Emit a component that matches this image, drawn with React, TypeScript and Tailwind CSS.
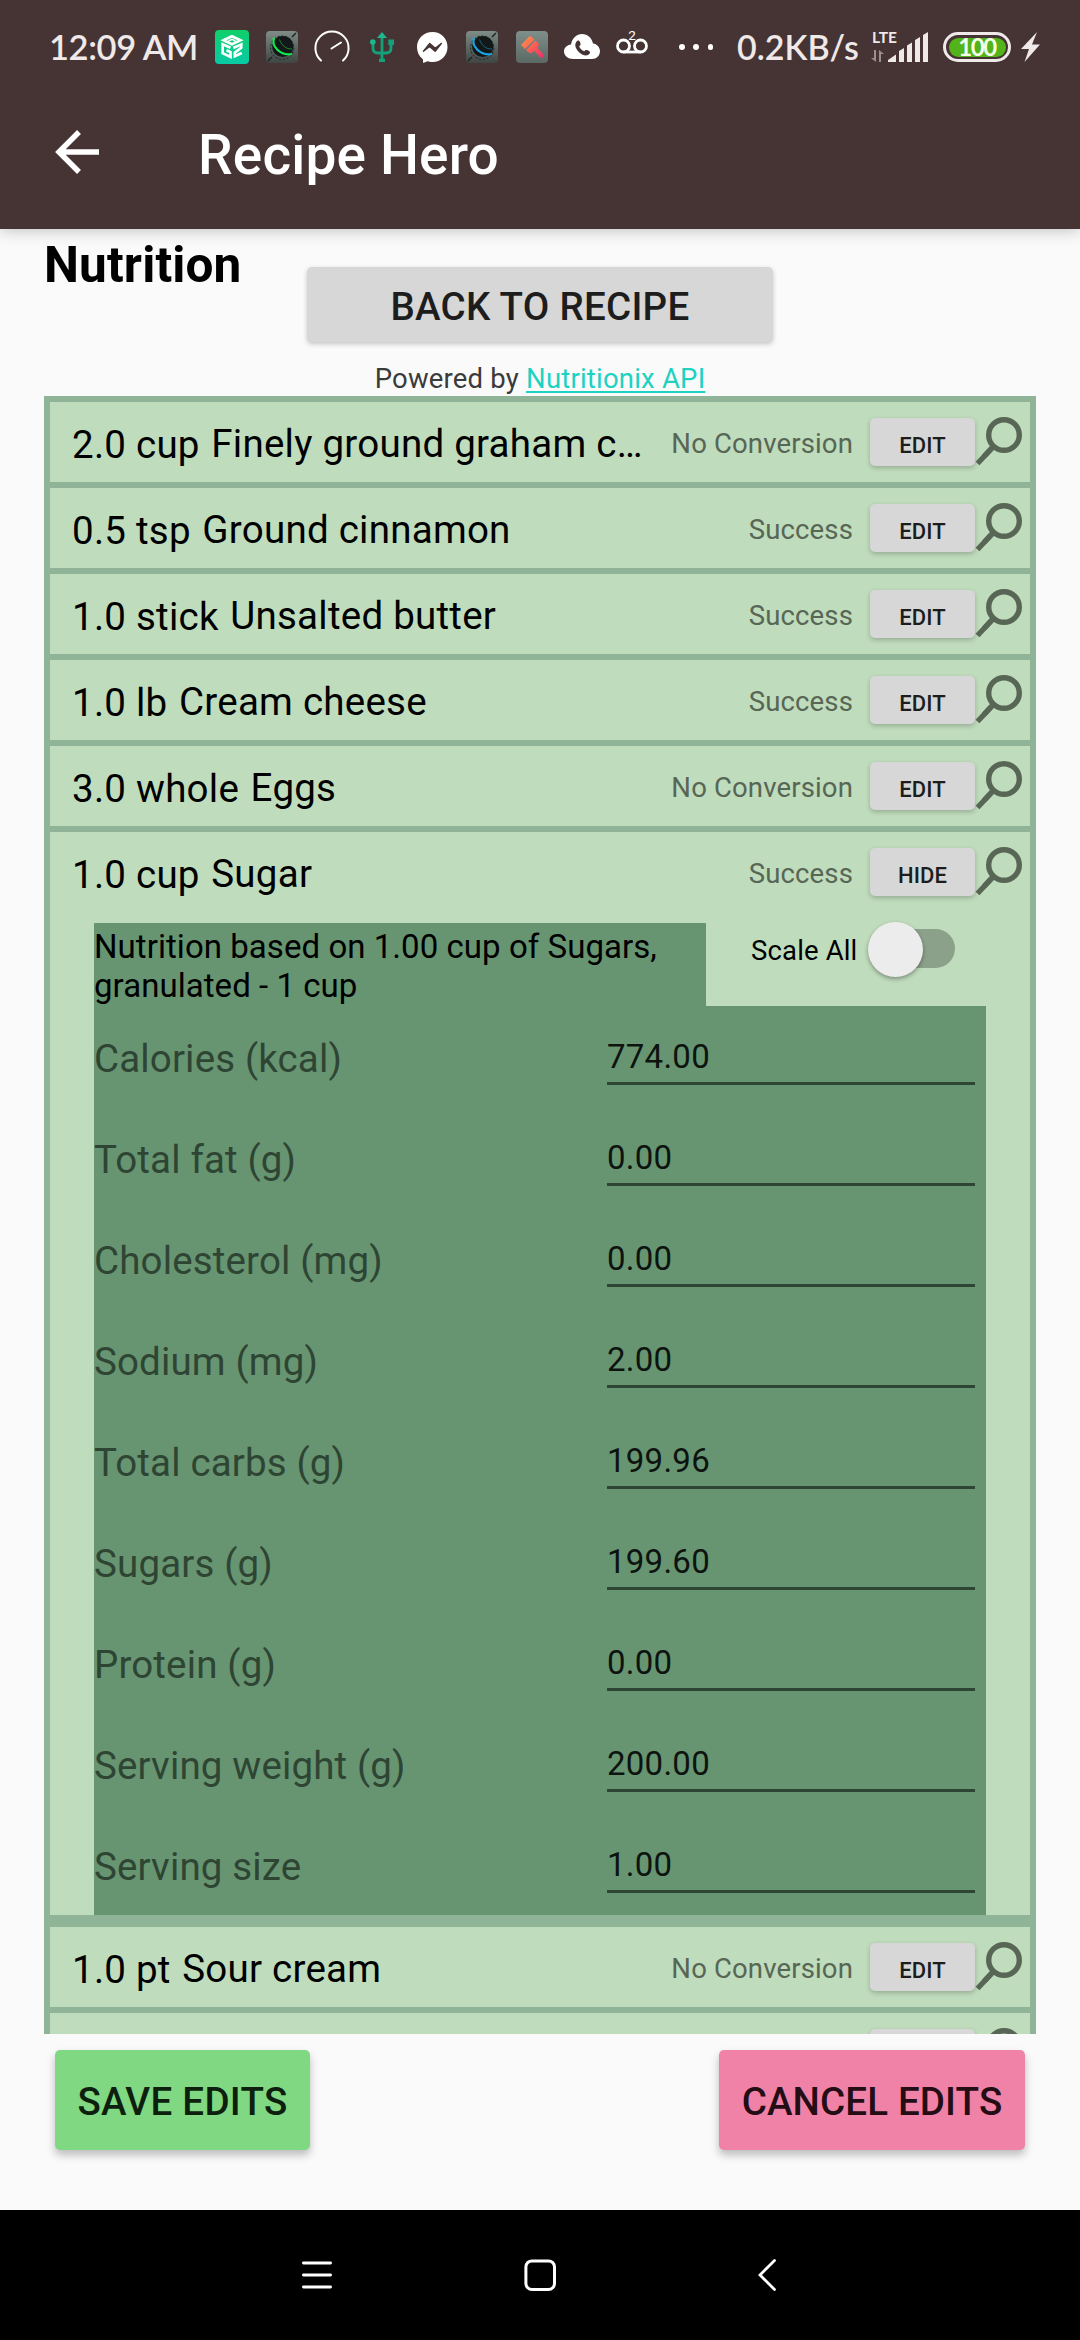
import React from "react";

type Ingredient = { amount: string; name: string; status: string };

const before: Ingredient[] = [
  { amount: "2.0 cup", name: "Finely ground graham c…", status: "No Conversion" },
  { amount: "0.5 tsp", name: "Ground cinnamon", status: "Success" },
  { amount: "1.0 stick", name: "Unsalted butter", status: "Success" },
  { amount: "1.0 lb", name: "Cream cheese", status: "Success" },
  { amount: "3.0 whole", name: "Eggs", status: "No Conversion" },
];

const facts: [string, string][] = [
  ["Calories (kcal)", "774.00"],
  ["Total fat (g)", "0.00"],
  ["Cholesterol (mg)", "0.00"],
  ["Sodium (mg)", "2.00"],
  ["Total carbs (g)", "199.96"],
  ["Sugars (g)", "199.60"],
  ["Protein (g)", "0.00"],
  ["Serving weight (g)", "200.00"],
  ["Serving size", "1.00"],
];

function SearchIcon() {
  return (
    <svg className="mt-3.5 h-[52px] w-[50px] shrink-0" viewBox="0 0 50 52" fill="none" stroke="#586655">
      <circle cx="29" cy="19" r="15.3" strokeWidth="5.4" />
      <path d="M17.500 31.500 2.500 47.500" strokeWidth="5.400" />
      <path d="M15.800 33.200 10 39.300" strokeWidth="5.400" strokeLinecap="round" />
    </svg>
  );
}

function RowHead({ item, action }: { item: Ingredient; action: string }) {
  return (
    <div className="flex h-20 items-start pl-[22px]">
      <div className="flex w-[578px] items-start text-[38.5px] leading-[45px] tracking-[0.25px] whitespace-nowrap text-black">
        <span className="shrink-0 pt-5">{item.amount}</span>
        <span className="ml-[11.5px] pt-[19px]">{item.name}</span>
      </div>
      <span className="flex-1 pt-[26px] pr-[17px] text-right text-[27.5px] leading-8 whitespace-nowrap text-[#586655]">
        {item.status}
      </span>
      <button className="mt-4 h-12 w-[105px] shrink-0 rounded-[5px] bg-[#d6d7d6] pt-[7px] text-[22px] leading-[26px] font-medium text-[#1d1d1d] shadow-[0_2px_5px_rgba(0,0,0,0.22)]">
        {action}
      </button>
      <SearchIcon />
      <div className="w-[5px] shrink-0" />
    </div>
  );
}

function Details() {
  return (
    <div className="pt-[11px] pr-[44px] pl-[44px]">
      <div className="flex h-[83px] items-start">
        <p className="h-full w-[612px] bg-[#679571] pt-1 text-[33px] leading-[39px] tracking-[0.05px] text-black">
          Nutrition based on 1.00 cup of Sugars, granulated - 1 cup
        </p>
        <span className="ml-[45px] pt-3 text-[27.5px] leading-8 whitespace-nowrap text-black">Scale All</span>
        <div className="relative mt-[6px] mr-[31px] ml-auto h-[39px] w-[78px] rounded-full bg-[#8ba18a]">
          <div className="absolute -top-[7px] -left-[9px] size-[55px] rounded-full bg-[#ececec] shadow-[0_2px_4px_rgba(0,0,0,0.35)]" />
        </div>
      </div>
      <div className="w-[892px] bg-[#679571]">
        {facts.map(([label, value]) => (
          <div key={label} className="flex h-[101px] items-start">
            <span className="w-[513px] pt-[30px] text-[38.5px] leading-[45px] text-[#2f4534]">{label}</span>
            <div className="h-[79px] w-[368px] border-b-[3px] border-[#2f4534] pt-[31px] text-[33px] leading-[39px] tracking-[0.25px] text-[#0d130f]">
              {value}
            </div>
          </div>
        ))}
      </div>
    </div>
  );
}

function ThemeTile({ accent, id }: { accent: string; id: string }) {
  return (
    <svg className="size-8" viewBox="0 0 32 32">
      <defs>
        <linearGradient id={id} x1="0" y1="0" x2="0" y2="1">
          <stop offset="0" stopColor="#7f8d88" />
          <stop offset="0.5" stopColor="#5d6864" />
          <stop offset="1" stopColor="#3f4644" />
        </linearGradient>
      </defs>
      <rect width="32" height="32" rx="4" fill={`url(#${id})`} />
      <path d="M26 6 30 2M2 30l4-4" stroke="#202624" strokeWidth="1.600" />
      <circle cx="16.2" cy="16.8" r="11.6" fill="none" stroke="#2d3432" strokeWidth="1.2" strokeDasharray="2.4 1.4" />
      <circle cx="16.8" cy="15.5" r="10.6" fill="#121817" />
      <path d="M8.200 6.500C5 14.500 13.500 25.200 25.800 23" fill="none" stroke={accent} strokeWidth="2.200" />
      <path d="M13.500 8.500C15.500 14.500 20.500 18.500 26.300 18" fill="none" stroke={accent} strokeWidth="0.900" opacity="0.600" />
    </svg>
  );
}

function StatusBar() {
  return (
    <div className="flex h-[94px] items-center pl-[49px] font-[Lato,sans-serif] tracking-normal text-[#efe9e9]">
      <span className="w-[149px] text-[34.5px] leading-[40px] font-semibold tracking-[-0.4px] whitespace-nowrap">12:09 AM</span>
      <div className="ml-[17px] flex w-[433px] items-center">
        <svg className="size-[34px]" viewBox="0 0 34 34">
          <defs>
            <linearGradient id="mint" x1="0" y1="0" x2="0" y2="1">
              <stop offset="0" stopColor="#0fcf6a" />
              <stop offset="1" stopColor="#08cba6" />
            </linearGradient>
          </defs>
          <rect width="34" height="34" rx="4" fill="url(#mint)" />
          <g fill="none" stroke="#fff" strokeWidth="2.600">
            <path d="M8.500 10.300 17 6.300l8.500 4-8.500 4z" />
            <path d="m13.500 11 3.500-1.600 3.500 1.600" strokeWidth="1.500" />
            <path d="M15.500 17.800 7.700 14.300v8.900l7.800 3.800v-5l-4-1.800" />
            <path d="m18.300 18 8-3.600v3.200l-6.500 5v3.600l7-3.200" />
          </g>
        </svg>
        <div className="ml-[17px]"><ThemeTile accent="#13e84c" id="tileGreen" /></div>
        <svg className="ml-4 h-[34px] w-9" viewBox="0 0 36 34" fill="none" stroke="#fff" strokeLinecap="round">
          <path d="M7 30.500A16.600 16.600 0 1 1 29 30.500" strokeWidth="2" />
          <path d="M17.500 18.500 27 12.500" strokeWidth="2" />
        </svg>
        <svg className="ml-5 h-[30px] w-6" viewBox="0 0 24 30" fill="none" stroke="#14a078" strokeWidth="2.800">
          <path d="M12 4v23M3 10.500V16q0 5 5 5h8q5 0 5-5v-5.500" />
          <path d="m12 0 5 6H7z" fill="#1fb78d" stroke="none" />
          <circle cx="2.800" cy="10" r="2.800" fill="#1fb78d" stroke="none" />
          <path d="M18.300 7.500H24v5.500h-5.700zM9 26.800h6V30H9z" fill="#14a078" stroke="none" />
        </svg>
        <svg className="ml-[23px] h-[31px] w-[31px]" viewBox="0 0 31 31">
          <path d="M15.500 0C24 0 30.500 6.300 30.500 15S24 30 15.500 30c-2 0-3.500-.3-5-.8L6.200 31l-.3-3.800C2 24.300 0 20 0 15 0 6.300 7 0 15.500 0z" fill="#fff" />
          <path d="m6.500 19.300 6.200-7.800 5.600 4.800 6-4.800-6.200 7.800-5.500-4.800z" fill="#463333" stroke="#463333" strokeWidth="1.400" strokeLinejoin="round" />
        </svg>
        <div className="ml-[18px]"><ThemeTile accent="#1ba4e6" id="tileBlue" /></div>
        <svg className="ml-[18px] size-8" viewBox="0 0 32 32">
          <defs>
            <linearGradient id="slate" x1="0" y1="0" x2="0" y2="1">
              <stop offset="0" stopColor="#7f8f89" />
              <stop offset="1" stopColor="#5b6864" />
            </linearGradient>
            <linearGradient id="brush" x1="0" y1="0" x2="1" y2="1">
              <stop offset="0" stopColor="#ff9a4a" />
              <stop offset="0.550" stopColor="#fb5a55" />
              <stop offset="1" stopColor="#ee2d6e" />
            </linearGradient>
          </defs>
          <rect width="32" height="32" rx="4" fill="url(#slate)" />
          <path
            d="M5 14 14 4.800l4.500 3.700L9 18.200zM10 19.300l9.600-9.800 3.400 3.800-1.500 3.700 6 6.500c1 2.300-1.500 4.200-3.500 2.700L18.500 20 14.500 22.500z"
            fill="url(#brush)"
          />
        </svg>
        <svg className="ml-4 h-[26px] w-9" viewBox="0 0 36 26">
          <path d="M9 25C4 25 0 21.500 0 17.500 0 13.500 3 11 7 10.500 8 4.500 12.500 0 18 0s10 4 11 9.500c4 .5 7 3.800 7 7.800 0 4.500-3.500 7.700-8 7.700z" fill="#fff" />
          <path d="M13 7.800c1-1 2.200-.6 2.800 1 .7 1.800.4 2.300-.8 3.300.7 2 2.200 3.500 4.300 4.300 1-1.300 1.600-1.500 3.300-.8 1.700.7 2 1.800 1.100 2.800-1.300 1.600-3.400 2-6.200.6-2.800-1.500-4.600-3.500-5.500-6-.6-2.200-.3-3.800 1-5.200z" fill="#463333" transform="translate(-2.500 -2) scale(1.180)" />
        </svg>
        <svg className="ml-4 h-[34px] w-8 overflow-visible" viewBox="0 0 32 34" fill="none" stroke="#fff">
          <circle cx="7.500" cy="16" r="6" strokeWidth="2.800" />
          <circle cx="24.500" cy="16" r="6" strokeWidth="2.800" />
          <path d="M7.500 22h17" strokeWidth="2.800" />
          <text x="16" y="10" textAnchor="middle" fontSize="13.500" fill="#fff" stroke="none" fontFamily="Roboto, sans-serif">2</text>
        </svg>
      </div>
      <div className="ml-[31px] flex w-[34px] justify-between">
        <i className="size-[5.5px] rounded-full bg-white" />
        <i className="size-[5.5px] rounded-full bg-white" />
        <i className="size-[5.5px] rounded-full bg-white" />
      </div>
      <span className="ml-6 w-[122px] text-[34px] leading-10 font-semibold whitespace-nowrap">0.2KB/s</span>
      <div className="relative ml-[12px] h-8 w-[58px]">
        <span className="absolute -top-1 left-[1px] text-[15.5px] leading-5 font-bold">LTE</span>
        <svg className="size-full" viewBox="0 0 58 32" fill="#efe9e9">
          <path d="M5 19v12l-5-4h3V19zM8 31V19l5 4h-3v8z" opacity="0.5" />
          <path d="M17 31v-2l8-5.500V31zM28 31V20l5-3v14zM36 31V14.500l5-3V31zM44 31V9l5-3v25zM52 31V4l5-3v30z" />
        </svg>
      </div>
      <div className="ml-[14px] flex h-[30px] w-[68px] items-center justify-center rounded-full border-[3px] border-[#efe9e9]">
        <div className="flex h-[19px] w-[57px] items-center justify-center rounded-full bg-[#52b31a] font-[Lato,sans-serif] text-[24px] leading-none font-bold tracking-[-1.5px] text-[#f4ffe8]">
          100
        </div>
      </div>
      <svg className="ml-[10px] h-[30px] w-[19px]" viewBox="0 0 19 30" fill="#efe9e9">
        <path d="M16 0 0 17h8L3.500 30 19 12.500h-8z" />
      </svg>
    </div>
  );
}

export default function App() {
  return (
    <div className="flex h-[2340px] w-[1080px] flex-col overflow-hidden bg-[#fafafa] font-[Roboto,sans-serif] tracking-[0.15px]">
      <header className="relative h-[229px] shrink-0 bg-[#463333] shadow-[0_2px_14px_rgba(0,0,0,0.22)]">
        <StatusBar />
        <div className="flex h-[135px] items-start pl-[55px]">
          <svg className="mt-9 h-11 w-[44px]" viewBox="0 0 44 44" fill="none" stroke="#fff" strokeWidth="5.500">
            <path d="M44 22H5M24 2 4 22l20 20" />
          </svg>
          <h1 className="ml-[99px] pt-[29px] text-[55px] leading-[64px] font-medium text-white">Recipe Hero</h1>
        </div>
      </header>

      <div className="flex h-[167px] shrink-0 pl-11">
        <h2 className="w-[263px] pt-[7px] text-[49.5px] leading-[58px] font-bold text-black">Nutrition</h2>
        <div className="flex w-[466px] flex-col items-center pt-[38px]">
          <button className="h-[75px] w-full rounded-[5px] bg-[#d6d7d6] pt-1 text-[38.5px] leading-[45px] font-medium tracking-[0.28px] text-[#1d1d1d] shadow-[0_2px_5px_rgba(0,0,0,0.22)]">
            BACK TO RECIPE
          </button>
          <p className="pt-[21px] text-[27.5px] leading-8 tracking-[0.2px] text-[#3b3b3b]">
            Powered by{" "}
            <a className="text-[#1ed2c2] underline decoration-[1.5px] underline-offset-[3px]">Nutritionix API</a>
          </p>
        </div>
      </div>

      <main className="mx-11 h-[1638px] shrink-0 overflow-hidden bg-[#8fb497] px-1.5 pt-1.5">
        {before.map((item) => (
          <section key={item.name} className="mb-1.5 bg-[#bfdcbc]">
            <RowHead item={item} action="EDIT" />
          </section>
        ))}
        <section className="mb-3 bg-[#bfdcbc]">
          <RowHead item={{ amount: "1.0 cup", name: "Sugar", status: "Success" }} action="HIDE" />
          <Details />
        </section>
        <section className="mb-1.5 bg-[#bfdcbc]">
          <RowHead item={{ amount: "1.0 pt", name: "Sour cream", status: "No Conversion" }} action="EDIT" />
        </section>
        <section className="bg-[#bfdcbc]">
          <RowHead item={{ amount: "", name: "", status: "" }} action="" />
        </section>
      </main>

      <div className="flex h-44 shrink-0 justify-between px-[55px] pt-4">
        <button className="h-[100px] w-[255px] rounded-[5px] bg-[#80d882] pt-0.5 text-[38.5px] leading-[45px] font-medium tracking-[0.3px] whitespace-nowrap text-[#0d1f0d] shadow-[0_5px_8px_rgba(0,0,0,0.25)]">
          SAVE EDITS
        </button>
        <button className="h-[100px] w-[306px] rounded-[5px] bg-[#f082a7] pt-0.5 text-[38.5px] leading-[45px] font-medium whitespace-nowrap text-[#240d15] shadow-[0_5px_8px_rgba(0,0,0,0.25)]">
          CANCEL EDITS
        </button>
      </div>

      <nav className="flex h-[130px] shrink-0 items-center bg-black pl-[302px]">
        <svg className="h-8 w-[30px]" viewBox="0 0 30 32" stroke="#fff" strokeWidth="2.800" strokeLinecap="round">
          <path d="M1.400 4h27.200M1.400 16h27.200M1.400 28h27.200" />
        </svg>
        <svg className="ml-[192px] size-8" viewBox="0 0 32 32" fill="none" stroke="#fff" strokeWidth="3">
          <rect x="1.900" y="1.900" width="28.600" height="28.600" rx="6" />
        </svg>
        <svg className="ml-[202px] h-8 w-[18px]" viewBox="0 0 18 32" fill="none" stroke="#fff" strokeWidth="2.800" strokeLinecap="round">
          <path d="M16.500 1.500 2 16l14.500 14.500" />
        </svg>
      </nav>
    </div>
  );
}
